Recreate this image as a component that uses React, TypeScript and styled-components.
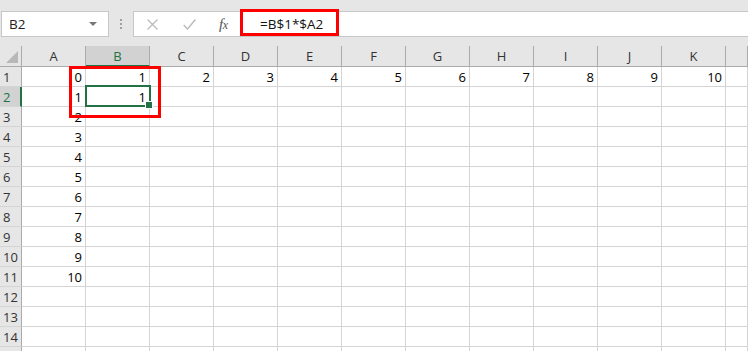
import React from "react";
import styled, { createGlobalStyle } from "styled-components";

const Global = createGlobalStyle`
  html, body { margin: 0; padding: 0; background: #e6e6e6; overflow: hidden; }
  * { box-sizing: border-box; }
`;

const GREEN = "#217346";
const GRID = "#d4d4d4";
const HEAD_LINE = "#ababab";
const UI_FONT = `"Open Sans", "Noto Sans", sans-serif`;

const Window = styled.div`
  position: relative;
  width: 748px;
  height: 351px;
  overflow: hidden;
  background: #e6e6e6;
  display: flex;
  flex-direction: column;
  font-family: ${UI_FONT};
`;

const TopStrip = styled.div`
  height: 11px;
  flex: none;
`;

const FormulaBar = styled.div`
  height: 26px;
  flex: none;
  display: flex;
  align-items: stretch;
  padding-left: 1px;
`;

const NameBox = styled.div`
  flex: none;
  width: 108px;
  background: #fff;
  border: 1px solid #c6c6c6;
  display: flex;
  align-items: center;
  justify-content: space-between;
  padding: 0 11px 0 7px;
  font-size: 13.5px;
  color: #222;
`;

const Caret = styled.span`
  width: 0;
  height: 0;
  border-left: 4px solid transparent;
  border-right: 4px solid transparent;
  border-top: 4px solid #777;
`;

const Grip = styled.div`
  flex: none;
  width: 24px;
  display: flex;
  flex-direction: column;
  align-items: center;
  justify-content: center;
  gap: 2px;
  span {
    width: 2px;
    height: 2px;
    background: #a0a0a0;
  }
`;

const FormulaBox = styled.div`
  flex: 1;
  background: #fff;
  border: 1px solid #c6c6c6;
  border-right: none;
  display: flex;
  align-items: center;
`;

const Tools = styled.div`
  flex: none;
  display: flex;
  align-items: center;
  width: 107px;
  padding-left: 13px;
  height: 100%;
`;

const ToolIcon = styled.span<{ $w: number }>`
  flex: none;
  width: ${(p) => p.$w}px;
  display: flex;
  align-items: center;
`;

const Fx = styled.span`
  flex: none;
  font-family: "Liberation Serif", "DejaVu Serif", serif;
  font-style: italic;
  font-size: 15px;
  color: #555;
  letter-spacing: -0.5px;
  span {
    font-size: 12px;
  }
`;

const FormulaText = styled.div`
  flex: none;
  padding-left: 19px;
  font-size: 13.5px;
  color: #111;
`;

const Gap = styled.div`
  height: 9px;
  flex: none;
`;

const Sheet = styled.div`
  flex: 1;
  display: grid;
  grid-template-columns: 22px repeat(11, 64px) 1fr;
  grid-template-rows: 21px;
  grid-auto-rows: 20px;
  background: #fff;
  overflow: hidden;
`;

const Corner = styled.div`
  position: relative;
  background: #e6e6e6;
  border-right: 1px solid ${HEAD_LINE};
  border-bottom: 1px solid ${HEAD_LINE};
  &::after {
    content: "";
    position: absolute;
    right: 3px;
    bottom: 3px;
    width: 0;
    height: 0;
    border-left: 12px solid transparent;
    border-bottom: 12px solid #b8b8b8;
  }
`;

const ColHead = styled.div<{ $sel?: boolean }>`
  background: ${(p) => (p.$sel ? "#d2d2d2" : "#e6e6e6")};
  border-right: 1px solid ${HEAD_LINE};
  border-bottom: ${(p) => (p.$sel ? `2px solid ${GREEN}` : `1px solid ${HEAD_LINE}`)};
  display: flex;
  align-items: center;
  justify-content: center;
  font-size: 13px;
  color: ${(p) => (p.$sel ? GREEN : "#333")};
  padding-top: ${(p) => (p.$sel ? "1px" : "0")};
`;

const RowHead = styled.div<{ $sel?: boolean }>`
  background: ${(p) => (p.$sel ? "#d2d2d2" : "#e6e6e6")};
  border-right: ${(p) => (p.$sel ? `2px solid ${GREEN}` : `1px solid ${HEAD_LINE}`)};
  border-bottom: 1px solid ${GRID};
  display: flex;
  align-items: center;
  padding-left: 3px;
  font-size: 13px;
  color: ${(p) => (p.$sel ? GREEN : "#333")};
`;

const Cell = styled.div<{ $sel?: boolean }>`
  position: relative;
  border-right: 1px solid ${GRID};
  border-bottom: 1px solid ${GRID};
  display: flex;
  align-items: center;
  justify-content: flex-end;
  padding-right: 3px;
  font-family: "Open Sans", "Liberation Sans", sans-serif;
  font-size: 13px;
  color: #000;
  ${(p) =>
    p.$sel &&
    `
    &::after {
      content: "";
      position: absolute;
      left: -1px;
      top: -2px;
      right: -2px;
      bottom: -1px;
      border: 2px solid ${GREEN};
      z-index: 1;
    }
    &::before {
      content: "";
      position: absolute;
      right: -4px;
      bottom: -3px;
      width: 6px;
      height: 6px;
      background: ${GREEN};
      border: 1px solid #fff;
      z-index: 2;
    }
  `}
`;

const RedBox = styled.div<{ $x: number; $y: number; $w: number; $h: number }>`
  position: absolute;
  left: ${(p) => p.$x}px;
  top: ${(p) => p.$y}px;
  width: ${(p) => p.$w}px;
  height: ${(p) => p.$h}px;
  border: 3px solid #ff0000;
  z-index: 5;
  pointer-events: none;
`;

const COLS = ["A", "B", "C", "D", "E", "F", "G", "H", "I", "J", "K", ""];
const LABELLED_ROWS = 14;
const ROWS = 15;

function value(r: number, c: number): string {
  if (c === 0 && r <= 11) return String(r - 1);
  if (r === 1 && c >= 1 && c <= 10) return String(c);
  if (r === 2 && c === 1) return "1";
  return "";
}

export default function App() {
  return (
    <>
      <Global />
      <Window>
        <TopStrip />
        <FormulaBar>
          <NameBox>
            B2
            <Caret />
          </NameBox>
          <Grip>
            <span />
            <span />
            <span />
          </Grip>
          <FormulaBox>
            <Tools>
              <ToolIcon $w={36}>
                <svg width="11" height="11" viewBox="0 0 11 11">
                  <path d="M0.5 0.5 L10.5 10.5 M10.5 0.5 L0.5 10.5" stroke="#bdbdbd" strokeWidth="1.4" fill="none" />
                </svg>
              </ToolIcon>
              <ToolIcon $w={36}>
                <svg width="13" height="11" viewBox="0 0 13 11">
                  <path d="M0.7 6 L4.5 10 L12.4 0.6" stroke="#bdbdbd" strokeWidth="1.5" fill="none" />
                </svg>
              </ToolIcon>
              <Fx>
                f<span>x</span>
              </Fx>
            </Tools>
            <FormulaText>=B$1*$A2</FormulaText>
          </FormulaBox>
        </FormulaBar>
        <Gap />
        <Sheet>
          <Corner />
          {COLS.map((c, i) => (
            <ColHead key={"h" + i} $sel={c === "B"}>
              {c}
            </ColHead>
          ))}
          {Array.from({ length: ROWS }, (_, ri) => {
            const r = ri + 1;
            return (
              <React.Fragment key={"r" + r}>
                <RowHead $sel={r === 2}>{r <= LABELLED_ROWS ? r : ""}</RowHead>
                {COLS.map((_, ci) => (
                  <Cell key={ci} $sel={r === 2 && ci === 1}>
                    {value(r, ci)}
                  </Cell>
                ))}
              </React.Fragment>
            );
          })}
        </Sheet>
        <RedBox $x={240} $y={9} $w={99} $h={27} />
        <RedBox $x={69} $y={66} $w={92} $h={52} />
      </Window>
    </>
  );
}
